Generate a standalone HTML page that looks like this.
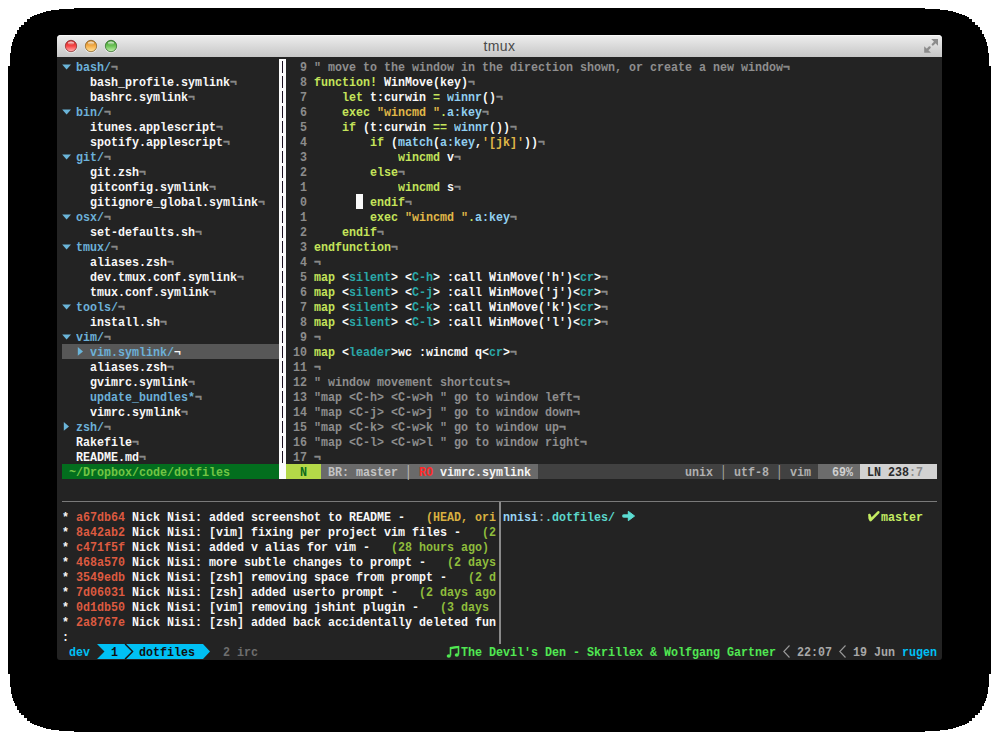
<!DOCTYPE html>
<html><head><meta charset="utf-8"><style>
html,body{margin:0;padding:0;background:#fff;width:999px;height:740px;overflow:hidden;position:relative}
.sh{position:absolute;left:8px;top:8px;width:983px;height:724px;background:#000;border-radius:58px}
.win{position:absolute;left:57px;top:35px;width:885px;height:625px;background:#232323;border-radius:4px 4px 3px 3px;overflow:hidden}
.tb{position:absolute;left:57px;top:35px;width:885px;height:22px;border-radius:4px 4px 0 0;background:linear-gradient(#eeeeee,#e2e2e2 30%,#c6c6c6);box-shadow:inset 0 1px 0 #f8f8f8}
.ttl{position:absolute;left:0;top:38px;width:999px;text-align:center;font:14px/17px "Liberation Sans",sans-serif;letter-spacing:0.4px;color:#4a4a4a}
.b{position:absolute}
.ce,.cw.e{-webkit-text-stroke:0.4px currentColor}
.t{position:absolute;font:bold 13.25px/15px "Liberation Mono",monospace;white-space:pre;transform:scaleX(0.88036);transform-origin:0 0}
.cw{color:#f8f8f8}
.cd{color:#6cb0d8}
.ce{color:#888888}
.cn{color:#8c8c8c}
.cc{color:#8e8e8e}
.ck{color:#c4e45a}
.cf{color:#90cff0}
.cs{color:#e0b848}
.ct{color:#2aa8a8}
.cr{color:#dc5a40}
.cy{color:#d8b040}
.cg{color:#8fbd3c}
.cp{color:#98d4f4}
.cq{color:#5cd8cc}
.cm{color:#c4ec62}
.cG{color:#50e852}
.cC{color:#00c0f4}
.cx{color:#6e6e6e}
.cX{color:#a8a8a8}
.cB{color:#101010}
.cSG{color:#72c444}
.cSN{color:#0d6b1c}
.cS1{color:#c4c4c4}
.cSR{color:#ff2a2a}
.cSW{color:#f4f4f4}
.cS2{color:#b0b0b0}
.cS3{color:#d0d0d0}
.cS4{color:#2a2a2a}
.cS5{color:#8a8a8a}
.cPX{color:#9a9a9a}
</style></head><body>
<svg width="999" height="740" style="position:absolute;left:0;top:0"><polygon points="8,370 8,66 10,66 10,53 11,53 11,46 12,46 12,42 13,42 13,39 14,39 14,37 15,37 15,34 17,34 17,30 19,30 19,27 21,27 21,25 24,25 24,22 27,22 27,19 30,19 30,17 32,17 32,16 34,16 34,15 37,15 37,14 40,14 40,13 43,13 43,12 46,12 46,11 51,11 51,10 59,10 59,9 74,9 74,8 499.5,8 499.5,8 925,8 925,9 940,9 940,10 948,10 948,11 953,11 953,12 956,12 956,13 959,13 959,14 962,14 962,15 965,15 965,16 967,16 967,17 969,17 969,19 972,19 972,22 975,22 975,25 978,25 978,27 980,27 980,30 982,30 982,34 984,34 984,37 985,37 985,39 986,39 986,42 987,42 987,46 988,46 988,53 989,53 989,66 991,66 991,370 991,370 991,674 989,674 989,687 988,687 988,694 987,694 987,698 986,698 986,701 985,701 985,703 984,703 984,706 982,706 982,710 980,710 980,713 978,713 978,715 975,715 975,718 972,718 972,721 969,721 969,723 967,723 967,724 965,724 965,725 962,725 962,726 959,726 959,727 956,727 956,728 953,728 953,729 948,729 948,730 940,730 940,731 925,731 925,732 499.5,732 499.5,732 74,732 74,731 59,731 59,730 51,730 51,729 46,729 46,728 43,728 43,727 40,727 40,726 37,726 37,725 34,725 34,724 32,724 32,723 30,723 30,721 27,721 27,718 24,718 24,715 21,715 21,713 19,713 19,710 17,710 17,706 15,706 15,703 14,703 14,701 13,701 13,698 12,698 12,694 11,694 11,687 10,687 10,674 8,674 8,370" fill="#000"/></svg>
<div class="win"></div>
<div class="tb"></div>
<div class="ttl">tmux</div>
<div class="b" style="left:62px;top:344px;width:217px;height:15px;background:#575757;"></div>
<div class="b" style="left:279px;top:59px;width:7px;height:15px;background:#fcfcfc;"></div>
<div class="b" style="left:279px;top:74px;width:7px;height:15px;background:#fcfcfc;"></div>
<div class="b" style="left:279px;top:89px;width:7px;height:15px;background:#fcfcfc;"></div>
<div class="b" style="left:279px;top:104px;width:7px;height:15px;background:#fcfcfc;"></div>
<div class="b" style="left:279px;top:119px;width:7px;height:15px;background:#fcfcfc;"></div>
<div class="b" style="left:279px;top:134px;width:7px;height:15px;background:#fcfcfc;"></div>
<div class="b" style="left:279px;top:149px;width:7px;height:15px;background:#fcfcfc;"></div>
<div class="b" style="left:279px;top:164px;width:7px;height:15px;background:#fcfcfc;"></div>
<div class="b" style="left:279px;top:179px;width:7px;height:15px;background:#fcfcfc;"></div>
<div class="b" style="left:279px;top:194px;width:7px;height:15px;background:#fcfcfc;"></div>
<div class="b" style="left:279px;top:209px;width:7px;height:15px;background:#fcfcfc;"></div>
<div class="b" style="left:279px;top:224px;width:7px;height:15px;background:#fcfcfc;"></div>
<div class="b" style="left:279px;top:239px;width:7px;height:15px;background:#fcfcfc;"></div>
<div class="b" style="left:279px;top:254px;width:7px;height:15px;background:#fcfcfc;"></div>
<div class="b" style="left:279px;top:269px;width:7px;height:15px;background:#fcfcfc;"></div>
<div class="b" style="left:279px;top:284px;width:7px;height:15px;background:#fcfcfc;"></div>
<div class="b" style="left:279px;top:299px;width:7px;height:15px;background:#fcfcfc;"></div>
<div class="b" style="left:279px;top:314px;width:7px;height:15px;background:#fcfcfc;"></div>
<div class="b" style="left:279px;top:329px;width:7px;height:15px;background:#fcfcfc;"></div>
<div class="b" style="left:279px;top:344px;width:7px;height:15px;background:#fcfcfc;"></div>
<div class="b" style="left:279px;top:359px;width:7px;height:15px;background:#fcfcfc;"></div>
<div class="b" style="left:279px;top:374px;width:7px;height:15px;background:#fcfcfc;"></div>
<div class="b" style="left:279px;top:389px;width:7px;height:15px;background:#fcfcfc;"></div>
<div class="b" style="left:279px;top:404px;width:7px;height:15px;background:#fcfcfc;"></div>
<div class="b" style="left:279px;top:419px;width:7px;height:15px;background:#fcfcfc;"></div>
<div class="b" style="left:279px;top:434px;width:7px;height:15px;background:#fcfcfc;"></div>
<div class="b" style="left:279px;top:449px;width:7px;height:15px;background:#fcfcfc;"></div>
<div class="b" style="left:279px;top:464px;width:7px;height:15px;background:#fcfcfc;"></div>
<div class="b" style="left:62px;top:464px;width:217px;height:15px;background:#036e1e;"></div>
<div class="b" style="left:286px;top:464px;width:35px;height:15px;background:#b4d848;"></div>
<div class="b" style="left:321px;top:464px;width:217px;height:15px;background:#6a6a6a;"></div>
<div class="b" style="left:538px;top:464px;width:280px;height:15px;background:#414141;"></div>
<div class="b" style="left:818px;top:464px;width:42px;height:15px;background:#6c6c6c;"></div>
<div class="b" style="left:860px;top:464px;width:77px;height:15px;background:#d2d2d2;"></div>
<div class="b" style="left:282px;top:61px;width:1px;height:12px;background:#1a1020;"></div>
<div class="b" style="left:282px;top:76px;width:1px;height:12px;background:#1a1020;"></div>
<div class="b" style="left:282px;top:91px;width:1px;height:12px;background:#1a1020;"></div>
<div class="b" style="left:282px;top:106px;width:1px;height:12px;background:#1a1020;"></div>
<div class="b" style="left:282px;top:121px;width:1px;height:12px;background:#1a1020;"></div>
<div class="b" style="left:282px;top:136px;width:1px;height:12px;background:#1a1020;"></div>
<div class="b" style="left:282px;top:151px;width:1px;height:12px;background:#1a1020;"></div>
<div class="b" style="left:282px;top:166px;width:1px;height:12px;background:#1a1020;"></div>
<div class="b" style="left:282px;top:181px;width:1px;height:12px;background:#1a1020;"></div>
<div class="b" style="left:282px;top:196px;width:1px;height:12px;background:#1a1020;"></div>
<div class="b" style="left:282px;top:211px;width:1px;height:12px;background:#1a1020;"></div>
<div class="b" style="left:282px;top:226px;width:1px;height:12px;background:#1a1020;"></div>
<div class="b" style="left:282px;top:241px;width:1px;height:12px;background:#1a1020;"></div>
<div class="b" style="left:282px;top:256px;width:1px;height:12px;background:#1a1020;"></div>
<div class="b" style="left:282px;top:271px;width:1px;height:12px;background:#1a1020;"></div>
<div class="b" style="left:282px;top:286px;width:1px;height:12px;background:#1a1020;"></div>
<div class="b" style="left:282px;top:301px;width:1px;height:12px;background:#1a1020;"></div>
<div class="b" style="left:282px;top:316px;width:1px;height:12px;background:#1a1020;"></div>
<div class="b" style="left:282px;top:331px;width:1px;height:12px;background:#1a1020;"></div>
<div class="b" style="left:282px;top:346px;width:1px;height:12px;background:#1a1020;"></div>
<div class="b" style="left:282px;top:361px;width:1px;height:12px;background:#1a1020;"></div>
<div class="b" style="left:282px;top:376px;width:1px;height:12px;background:#1a1020;"></div>
<div class="b" style="left:282px;top:391px;width:1px;height:12px;background:#1a1020;"></div>
<div class="b" style="left:282px;top:406px;width:1px;height:12px;background:#1a1020;"></div>
<div class="b" style="left:282px;top:421px;width:1px;height:12px;background:#1a1020;"></div>
<div class="b" style="left:282px;top:436px;width:1px;height:12px;background:#1a1020;"></div>
<div class="b" style="left:282px;top:451px;width:1px;height:12px;background:#1a1020;"></div>
<div class="b" style="left:62px;top:500.5px;width:875px;height:1.5px;background:#7a7a7a;"></div>
<div class="b" style="left:499px;top:502px;width:1.5px;height:142px;background:#8a8a8a;"></div>
<div class="b" style="left:356px;top:194px;width:7px;height:15px;background:#fafafa;"></div>
<svg width="999" height="740" style="position:absolute;left:0;top:0">
<defs>
<linearGradient id="gr" x1="0" y1="0" x2="0" y2="1"><stop offset="0" stop-color="#c42828"/><stop offset="0.5" stop-color="#f84444"/><stop offset="1" stop-color="#ffb4b4"/></linearGradient>
<linearGradient id="go" x1="0" y1="0" x2="0" y2="1"><stop offset="0" stop-color="#c07a1c"/><stop offset="0.5" stop-color="#f6ae48"/><stop offset="1" stop-color="#ffe49c"/></linearGradient>
<linearGradient id="gg" x1="0" y1="0" x2="0" y2="1"><stop offset="0" stop-color="#3c922c"/><stop offset="0.5" stop-color="#6cc456"/><stop offset="1" stop-color="#c4f0ae"/></linearGradient>
<linearGradient id="hl" x1="0" y1="0" x2="0" y2="1"><stop offset="0" stop-color="#fff" stop-opacity="0.9"/><stop offset="1" stop-color="#fff" stop-opacity="0"/></linearGradient>
</defs>
<polygon points="62.2,64.5 71,64.5 66.6,69.6" fill="#6ab4d8"/>
<polygon points="62.2,109.5 71,109.5 66.6,114.6" fill="#6ab4d8"/>
<polygon points="62.2,154.5 71,154.5 66.6,159.6" fill="#6ab4d8"/>
<polygon points="62.2,214.5 71,214.5 66.6,219.6" fill="#6ab4d8"/>
<polygon points="62.2,244.5 71,244.5 66.6,249.6" fill="#6ab4d8"/>
<polygon points="62.2,304.5 71,304.5 66.6,309.6" fill="#6ab4d8"/>
<polygon points="62.2,334.5 71,334.5 66.6,339.6" fill="#6ab4d8"/>
<polygon points="77.8,347 83,351.4 77.8,355.8" fill="#6ab4d8"/>
<polygon points="63.8,422 69,426.4 63.8,430.8" fill="#6ab4d8"/>
<circle cx="71" cy="46.5" r="6.6" fill="#f4f4f4" opacity="0.6"/>
<circle cx="71" cy="46" r="5.7" fill="url(#gr)" stroke="#7a1a1a" stroke-opacity="0.75" stroke-width="0.9"/>
<ellipse cx="71" cy="43.2" rx="3.2" ry="1.8" fill="url(#hl)"/>
<circle cx="91" cy="46.5" r="6.6" fill="#f4f4f4" opacity="0.6"/>
<circle cx="91" cy="46" r="5.7" fill="url(#go)" stroke="#7a5014" stroke-opacity="0.75" stroke-width="0.9"/>
<ellipse cx="91" cy="43.2" rx="3.2" ry="1.8" fill="url(#hl)"/>
<circle cx="111" cy="46.5" r="6.6" fill="#f4f4f4" opacity="0.6"/>
<circle cx="111" cy="46" r="5.7" fill="url(#gg)" stroke="#1e5a16" stroke-opacity="0.75" stroke-width="0.9"/>
<ellipse cx="111" cy="43.2" rx="3.2" ry="1.8" fill="url(#hl)"/>
<path d="M931.2,39 L938,39 L938,45.8 Z M924.2,46.2 L924.2,52.8 L931,52.8 Z" fill="#8c8c8c"/>
<path d="M935.5,41.8 L932.8,44.5 M926.8,50.2 L929.6,47.4" stroke="#8c8c8c" stroke-width="2.3" stroke-linecap="round"/>
<path d="M97,644 L125,644 L132.5,651.5 L125,659 L97,659 L104.5,651.5 Z" fill="#00c0f4"/>
<path d="M126,644 L203,644 L210,651.5 L203,659 L126,659 L133.5,651.5 Z" fill="#00c0f4"/>
<path d="M125,644 L132.5,651.5 L125,659" fill="none" stroke="#151515" stroke-width="1.2"/>
<path d="M789.5,645.5 L783.8,651.5 L789.5,657.5" fill="none" stroke="#9a9a9a" stroke-width="1.1"/>
<path d="M845.5,645.5 L839.8,651.5 L845.5,657.5" fill="none" stroke="#9a9a9a" stroke-width="1.1"/>
<path d="M450.5,655.5 L450.5,647.8 L458.5,646.6 L458.5,654.5" fill="none" stroke="#50e852" stroke-width="1.6"/>
<path d="M450.5,648.2 L458.5,647" stroke="#50e852" stroke-width="2"/>
<ellipse cx="448.8" cy="656" rx="2.1" ry="1.7" fill="#50e852"/>
<ellipse cx="456.8" cy="655" rx="2.1" ry="1.7" fill="#50e852"/>
<path d="M623.8,516 L629,516" stroke="#5cdcd2" stroke-width="3.4" stroke-linecap="round"/>
<path d="M628.3,511.3 L634.6,516 L628.3,520.7 Z" fill="#5cdcd2" stroke="#5cdcd2" stroke-width="1" stroke-linejoin="round"/>
<path d="M869.4,515 L870.6,520.1 L878.3,512.3" fill="none" stroke="#c4ec62" stroke-width="2.6" stroke-linecap="round" stroke-linejoin="round"/>
<ellipse cx="870" cy="518" rx="1.6" ry="2.4" fill="#c4ec62"/>
</svg>
<div class="t cd" style="left:76px;top:60px">bash/</div>
<div class="t ce" style="left:111px;top:60px">¬</div>
<div class="t cn" style="left:293px;top:60px"> 9</div>
<div class="t cc" style="left:314px;top:60px">&quot; move to the window in the direction shown, or create a new window</div>
<div class="t ce" style="left:783px;top:60px">¬</div>
<div class="t cw" style="left:90px;top:75px">bash_profile.symlink</div>
<div class="t ce" style="left:230px;top:75px">¬</div>
<div class="t cn" style="left:293px;top:75px"> 8</div>
<div class="t ck" style="left:314px;top:75px">function!</div>
<div class="t cw" style="left:377px;top:75px"> WinMove(key)</div>
<div class="t ce" style="left:468px;top:75px">¬</div>
<div class="t cw" style="left:90px;top:90px">bashrc.symlink</div>
<div class="t ce" style="left:188px;top:90px">¬</div>
<div class="t cn" style="left:293px;top:90px"> 7</div>
<div class="t ck" style="left:342px;top:90px">let</div>
<div class="t cw" style="left:363px;top:90px"> t:curwin </div>
<div class="t ck" style="left:433px;top:90px">=</div>
<div class="t cf" style="left:447px;top:90px">winnr</div>
<div class="t cw" style="left:482px;top:90px">()</div>
<div class="t ce" style="left:496px;top:90px">¬</div>
<div class="t cd" style="left:76px;top:105px">bin/</div>
<div class="t ce" style="left:104px;top:105px">¬</div>
<div class="t cn" style="left:293px;top:105px"> 6</div>
<div class="t ck" style="left:342px;top:105px">exec</div>
<div class="t cs" style="left:377px;top:105px">&quot;wincmd &quot;</div>
<div class="t ck" style="left:440px;top:105px">.</div>
<div class="t cf" style="left:447px;top:105px">a:key</div>
<div class="t ce" style="left:482px;top:105px">¬</div>
<div class="t cw" style="left:90px;top:120px">itunes.applescript</div>
<div class="t ce" style="left:216px;top:120px">¬</div>
<div class="t cn" style="left:293px;top:120px"> 5</div>
<div class="t ck" style="left:342px;top:120px">if</div>
<div class="t cw" style="left:356px;top:120px"> (t:curwin </div>
<div class="t ck" style="left:433px;top:120px">==</div>
<div class="t cf" style="left:454px;top:120px">winnr</div>
<div class="t cw" style="left:489px;top:120px">())</div>
<div class="t ce" style="left:510px;top:120px">¬</div>
<div class="t cw" style="left:90px;top:135px">spotify.applescript</div>
<div class="t ce" style="left:223px;top:135px">¬</div>
<div class="t cn" style="left:293px;top:135px"> 4</div>
<div class="t ck" style="left:370px;top:135px">if</div>
<div class="t cw" style="left:384px;top:135px"> (</div>
<div class="t cf" style="left:398px;top:135px">match</div>
<div class="t cw" style="left:433px;top:135px">(</div>
<div class="t cf" style="left:440px;top:135px">a:key</div>
<div class="t cw" style="left:475px;top:135px">,</div>
<div class="t cs" style="left:482px;top:135px">&#x27;[jk]&#x27;</div>
<div class="t cw" style="left:524px;top:135px">))</div>
<div class="t ce" style="left:538px;top:135px">¬</div>
<div class="t cd" style="left:76px;top:150px">git/</div>
<div class="t ce" style="left:104px;top:150px">¬</div>
<div class="t cn" style="left:293px;top:150px"> 3</div>
<div class="t ck" style="left:398px;top:150px">wincmd</div>
<div class="t cw" style="left:440px;top:150px"> v</div>
<div class="t ce" style="left:454px;top:150px">¬</div>
<div class="t cw" style="left:90px;top:165px">git.zsh</div>
<div class="t ce" style="left:139px;top:165px">¬</div>
<div class="t cn" style="left:293px;top:165px"> 2</div>
<div class="t ck" style="left:370px;top:165px">else</div>
<div class="t ce" style="left:398px;top:165px">¬</div>
<div class="t cw" style="left:90px;top:180px">gitconfig.symlink</div>
<div class="t ce" style="left:209px;top:180px">¬</div>
<div class="t cn" style="left:293px;top:180px"> 1</div>
<div class="t ck" style="left:398px;top:180px">wincmd</div>
<div class="t cw" style="left:440px;top:180px"> s</div>
<div class="t ce" style="left:454px;top:180px">¬</div>
<div class="t cw" style="left:90px;top:195px">gitignore_global.symlink</div>
<div class="t ce" style="left:258px;top:195px">¬</div>
<div class="t cn" style="left:293px;top:195px"> 0</div>
<div class="t ck" style="left:370px;top:195px">endif</div>
<div class="t ce" style="left:405px;top:195px">¬</div>
<div class="t cd" style="left:76px;top:210px">osx/</div>
<div class="t ce" style="left:104px;top:210px">¬</div>
<div class="t cn" style="left:293px;top:210px"> 1</div>
<div class="t ck" style="left:370px;top:210px">exec</div>
<div class="t cs" style="left:405px;top:210px">&quot;wincmd &quot;</div>
<div class="t ck" style="left:468px;top:210px">.</div>
<div class="t cf" style="left:475px;top:210px">a:key</div>
<div class="t ce" style="left:510px;top:210px">¬</div>
<div class="t cw" style="left:90px;top:225px">set-defaults.sh</div>
<div class="t ce" style="left:195px;top:225px">¬</div>
<div class="t cn" style="left:293px;top:225px"> 2</div>
<div class="t ck" style="left:342px;top:225px">endif</div>
<div class="t ce" style="left:377px;top:225px">¬</div>
<div class="t cd" style="left:76px;top:240px">tmux/</div>
<div class="t ce" style="left:111px;top:240px">¬</div>
<div class="t cn" style="left:293px;top:240px"> 3</div>
<div class="t ck" style="left:314px;top:240px">endfunction</div>
<div class="t ce" style="left:391px;top:240px">¬</div>
<div class="t cw" style="left:90px;top:255px">aliases.zsh</div>
<div class="t ce" style="left:167px;top:255px">¬</div>
<div class="t cn" style="left:293px;top:255px"> 4</div>
<div class="t ce" style="left:314px;top:255px">¬</div>
<div class="t cw" style="left:90px;top:270px">dev.tmux.conf.symlink</div>
<div class="t ce" style="left:237px;top:270px">¬</div>
<div class="t cn" style="left:293px;top:270px"> 5</div>
<div class="t ck" style="left:314px;top:270px">map</div>
<div class="t cw" style="left:335px;top:270px"> &lt;</div>
<div class="t ct" style="left:349px;top:270px">silent</div>
<div class="t cw" style="left:391px;top:270px">&gt; &lt;</div>
<div class="t ct" style="left:412px;top:270px">C-h</div>
<div class="t cw" style="left:433px;top:270px">&gt; :call WinMove(&#x27;h&#x27;)&lt;</div>
<div class="t ct" style="left:580px;top:270px">cr</div>
<div class="t cw" style="left:594px;top:270px">&gt;</div>
<div class="t ce" style="left:601px;top:270px">¬</div>
<div class="t cw" style="left:90px;top:285px">tmux.conf.symlink</div>
<div class="t ce" style="left:209px;top:285px">¬</div>
<div class="t cn" style="left:293px;top:285px"> 6</div>
<div class="t ck" style="left:314px;top:285px">map</div>
<div class="t cw" style="left:335px;top:285px"> &lt;</div>
<div class="t ct" style="left:349px;top:285px">silent</div>
<div class="t cw" style="left:391px;top:285px">&gt; &lt;</div>
<div class="t ct" style="left:412px;top:285px">C-j</div>
<div class="t cw" style="left:433px;top:285px">&gt; :call WinMove(&#x27;j&#x27;)&lt;</div>
<div class="t ct" style="left:580px;top:285px">cr</div>
<div class="t cw" style="left:594px;top:285px">&gt;</div>
<div class="t ce" style="left:601px;top:285px">¬</div>
<div class="t cd" style="left:76px;top:300px">tools/</div>
<div class="t ce" style="left:118px;top:300px">¬</div>
<div class="t cn" style="left:293px;top:300px"> 7</div>
<div class="t ck" style="left:314px;top:300px">map</div>
<div class="t cw" style="left:335px;top:300px"> &lt;</div>
<div class="t ct" style="left:349px;top:300px">silent</div>
<div class="t cw" style="left:391px;top:300px">&gt; &lt;</div>
<div class="t ct" style="left:412px;top:300px">C-k</div>
<div class="t cw" style="left:433px;top:300px">&gt; :call WinMove(&#x27;k&#x27;)&lt;</div>
<div class="t ct" style="left:580px;top:300px">cr</div>
<div class="t cw" style="left:594px;top:300px">&gt;</div>
<div class="t ce" style="left:601px;top:300px">¬</div>
<div class="t cw" style="left:90px;top:315px">install.sh</div>
<div class="t ce" style="left:160px;top:315px">¬</div>
<div class="t cn" style="left:293px;top:315px"> 8</div>
<div class="t ck" style="left:314px;top:315px">map</div>
<div class="t cw" style="left:335px;top:315px"> &lt;</div>
<div class="t ct" style="left:349px;top:315px">silent</div>
<div class="t cw" style="left:391px;top:315px">&gt; &lt;</div>
<div class="t ct" style="left:412px;top:315px">C-l</div>
<div class="t cw" style="left:433px;top:315px">&gt; :call WinMove(&#x27;l&#x27;)&lt;</div>
<div class="t ct" style="left:580px;top:315px">cr</div>
<div class="t cw" style="left:594px;top:315px">&gt;</div>
<div class="t ce" style="left:601px;top:315px">¬</div>
<div class="t cd" style="left:76px;top:330px">vim/</div>
<div class="t ce" style="left:104px;top:330px">¬</div>
<div class="t cn" style="left:293px;top:330px"> 9</div>
<div class="t ce" style="left:314px;top:330px">¬</div>
<div class="t cd" style="left:90px;top:345px">vim.symlink/</div>
<div class="t cw" style="left:174px;top:345px">¬</div>
<div class="t cn" style="left:293px;top:345px">10</div>
<div class="t ck" style="left:314px;top:345px">map</div>
<div class="t cw" style="left:335px;top:345px"> &lt;</div>
<div class="t ct" style="left:349px;top:345px">leader</div>
<div class="t cw" style="left:391px;top:345px">&gt;wc :wincmd q&lt;</div>
<div class="t ct" style="left:489px;top:345px">cr</div>
<div class="t cw" style="left:503px;top:345px">&gt;</div>
<div class="t ce" style="left:510px;top:345px">¬</div>
<div class="t cw" style="left:90px;top:360px">aliases.zsh</div>
<div class="t ce" style="left:167px;top:360px">¬</div>
<div class="t cn" style="left:293px;top:360px">11</div>
<div class="t ce" style="left:314px;top:360px">¬</div>
<div class="t cw" style="left:90px;top:375px">gvimrc.symlink</div>
<div class="t ce" style="left:188px;top:375px">¬</div>
<div class="t cn" style="left:293px;top:375px">12</div>
<div class="t cc" style="left:314px;top:375px">&quot; window movement shortcuts</div>
<div class="t ce" style="left:503px;top:375px">¬</div>
<div class="t cd" style="left:90px;top:390px">update_bundles*</div>
<div class="t ce" style="left:195px;top:390px">¬</div>
<div class="t cn" style="left:293px;top:390px">13</div>
<div class="t cc" style="left:314px;top:390px">&quot;map &lt;C-h&gt; &lt;C-w&gt;h &quot; go to window left</div>
<div class="t ce" style="left:573px;top:390px">¬</div>
<div class="t cw" style="left:90px;top:405px">vimrc.symlink</div>
<div class="t ce" style="left:181px;top:405px">¬</div>
<div class="t cn" style="left:293px;top:405px">14</div>
<div class="t cc" style="left:314px;top:405px">&quot;map &lt;C-j&gt; &lt;C-w&gt;j &quot; go to window down</div>
<div class="t ce" style="left:573px;top:405px">¬</div>
<div class="t cd" style="left:76px;top:420px">zsh/</div>
<div class="t ce" style="left:104px;top:420px">¬</div>
<div class="t cn" style="left:293px;top:420px">15</div>
<div class="t cc" style="left:314px;top:420px">&quot;map &lt;C-k&gt; &lt;C-w&gt;k &quot; go to window up</div>
<div class="t ce" style="left:559px;top:420px">¬</div>
<div class="t cw" style="left:76px;top:435px">Rakefile</div>
<div class="t ce" style="left:132px;top:435px">¬</div>
<div class="t cn" style="left:293px;top:435px">16</div>
<div class="t cc" style="left:314px;top:435px">&quot;map &lt;C-l&gt; &lt;C-w&gt;l &quot; go to window right</div>
<div class="t ce" style="left:580px;top:435px">¬</div>
<div class="t cw" style="left:76px;top:450px">README.md</div>
<div class="t ce" style="left:139px;top:450px">¬</div>
<div class="t cn" style="left:293px;top:450px">17</div>
<div class="t ce" style="left:314px;top:450px">¬</div>
<div class="t cSG" style="left:62px;top:465px"> ~/Dropbox/code/dotfiles</div>
<div class="t cSN" style="left:300px;top:465px">N</div>
<div class="t cS1" style="left:328px;top:465px">BR: master</div>
<div class="t cS1" style="left:405px;top:465px">│</div>
<div class="t cSR" style="left:419px;top:465px">RO</div>
<div class="t cSW" style="left:440px;top:465px">vimrc.symlink</div>
<div class="t cS2" style="left:685px;top:465px">unix</div>
<div class="t cS2" style="left:720px;top:465px">│</div>
<div class="t cS2" style="left:734px;top:465px">utf-8</div>
<div class="t cS2" style="left:776px;top:465px">│</div>
<div class="t cS2" style="left:790px;top:465px">vim</div>
<div class="t cS3" style="left:832px;top:465px">69%</div>
<div class="t cS4" style="left:867px;top:465px">LN 238</div>
<div class="t cS5" style="left:909px;top:465px">:7</div>
<div class="t cw" style="left:62px;top:510px">* </div>
<div class="t cr" style="left:76px;top:510px">a67db64</div>
<div class="t cw" style="left:125px;top:510px"> Nick Nisi: added screenshot to README -   </div>
<div class="t cy" style="left:426px;top:510px">(HEAD, ori</div>
<div class="t cp" style="left:503px;top:510px">nnisi</div>
<div class="t cPX" style="left:538px;top:510px">:</div>
<div class="t cq" style="left:545px;top:510px">.dotfiles/</div>
<div class="t cm" style="left:881px;top:510px">master</div>
<div class="t cw" style="left:62px;top:525px">* </div>
<div class="t cr" style="left:76px;top:525px">8a42ab2</div>
<div class="t cw" style="left:125px;top:525px"> Nick Nisi: [vim] fixing per project vim files -   </div>
<div class="t cg" style="left:482px;top:525px">(2</div>
<div class="t cw" style="left:62px;top:540px">* </div>
<div class="t cr" style="left:76px;top:540px">c471f5f</div>
<div class="t cw" style="left:125px;top:540px"> Nick Nisi: added v alias for vim -   </div>
<div class="t cg" style="left:391px;top:540px">(28 hours ago)</div>
<div class="t cw" style="left:62px;top:555px">* </div>
<div class="t cr" style="left:76px;top:555px">468a570</div>
<div class="t cw" style="left:125px;top:555px"> Nick Nisi: more subtle changes to prompt -   </div>
<div class="t cg" style="left:447px;top:555px">(2 days</div>
<div class="t cw" style="left:62px;top:570px">* </div>
<div class="t cr" style="left:76px;top:570px">3549edb</div>
<div class="t cw" style="left:125px;top:570px"> Nick Nisi: [zsh] removing space from prompt -   </div>
<div class="t cg" style="left:468px;top:570px">(2 d</div>
<div class="t cw" style="left:62px;top:585px">* </div>
<div class="t cr" style="left:76px;top:585px">7d06031</div>
<div class="t cw" style="left:125px;top:585px"> Nick Nisi: [zsh] added userto prompt -   </div>
<div class="t cg" style="left:419px;top:585px">(2 days ago</div>
<div class="t cw" style="left:62px;top:600px">* </div>
<div class="t cr" style="left:76px;top:600px">0d1db50</div>
<div class="t cw" style="left:125px;top:600px"> Nick Nisi: [vim] removing jshint plugin -   </div>
<div class="t cg" style="left:440px;top:600px">(3 days</div>
<div class="t cw" style="left:62px;top:615px">* </div>
<div class="t cr" style="left:76px;top:615px">2a8767e</div>
<div class="t cw" style="left:125px;top:615px"> Nick Nisi: [zsh] added back accidentally deleted fun</div>
<div class="t cw" style="left:62px;top:630px">:</div>
<div class="t cC" style="left:69px;top:645px">dev</div>
<div class="t cB" style="left:111px;top:645px">1</div>
<div class="t cB" style="left:139px;top:645px">dotfiles</div>
<div class="t cx" style="left:223px;top:645px">2 irc</div>
<div class="t cG" style="left:461px;top:645px">The Devil&#x27;s Den - Skrillex &amp; Wolfgang Gartner</div>
<div class="t cX" style="left:797px;top:645px">22:07</div>
<div class="t cX" style="left:853px;top:645px">19 Jun</div>
<div class="t cC" style="left:902px;top:645px">rugen</div>
</body></html>
